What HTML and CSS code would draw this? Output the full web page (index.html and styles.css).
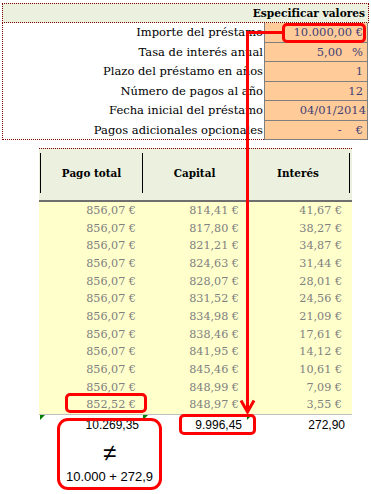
FILE: index.html
```html
<!DOCTYPE html>
<html lang="es">
<head>
<meta charset="utf-8">
<title>Préstamo</title>
<link rel="stylesheet" href="styles.css">
</head>
<body>
<div class="page">
  <section class="spec">
    <div class="spec-head">Especificar valores</div>
    <div class="spec-grid">
      <div class="lbl">Importe del préstamo</div><div class="val">10.000,00 €</div>
      <div class="lbl">Tasa de interés anual</div><div class="val">5,00 <span class="pct">%</span></div>
      <div class="lbl">Plazo del préstamo en años</div><div class="val">1</div>
      <div class="lbl">Número de pagos al año</div><div class="val">12</div>
      <div class="lbl">Fecha inicial del préstamo</div><div class="val">04/01/2014</div>
      <div class="lbl last">Pagos adicionales opcionales</div><div class="val last"><span class="dash">-</span>€</div>
    </div>
  </section>

  <section class="sched">
    <div class="sched-head">
      <div class="hc">Pago total</div>
      <div class="hc">Capital</div>
      <div class="hc hc-last">Interés</div>
    </div>
    <div class="sched-body">
      <div>856,07 €</div><div>814,41 €</div><div>41,67 €</div>
      <div>856,07 €</div><div>817,80 €</div><div>38,27 €</div>
      <div>856,07 €</div><div>821,21 €</div><div>34,87 €</div>
      <div>856,07 €</div><div>824,63 €</div><div>31,44 €</div>
      <div>856,07 €</div><div>828,07 €</div><div>28,01 €</div>
      <div>856,07 €</div><div>831,52 €</div><div>24,56 €</div>
      <div>856,07 €</div><div>834,98 €</div><div>21,09 €</div>
      <div>856,07 €</div><div>838,46 €</div><div>17,61 €</div>
      <div>856,07 €</div><div>841,95 €</div><div>14,12 €</div>
      <div>856,07 €</div><div>845,46 €</div><div>10,61 €</div>
      <div>856,07 €</div><div>848,99 €</div><div>7,09 €</div>
      <div>852,52 €</div><div>848,97 €</div><div>3,55 €</div>
    </div>
    <div class="totals">
      <div class="tc flag">10.269,35</div>
      <div class="tc flag">9.996,45</div>
      <div class="tc flag">272,90</div>
    </div>
  </section>

  <div class="mark mark-amount"></div>
  <div class="mark mark-last"></div>
  <div class="mark mark-capital"></div>
  <div class="mark mark-note">
    <div class="neq">≠</div>
    <div class="sum">10.000 + 272,9</div>
  </div>
  <svg class="arrow" width="371" height="494" viewBox="0 0 371 494">
    <path d="M283 32.5 H247.5 V411" fill="none" stroke="#ff0000" stroke-width="3"/>
    <path d="M241 400.5 L247.5 412 L254 400.5" fill="none" stroke="#ff0000" stroke-width="3"/>
  </svg>
</div>
</body>
</html>
```

FILE: styles.css
```css
* { box-sizing: border-box; }
html, body { margin: 0; padding: 0; background: #ffffff; }
.page {
  position: relative;
  width: 371px;
  height: 494px;
  overflow: hidden;
  font-family: "DejaVu Serif", "Liberation Serif", serif;
  font-size: 11.5px;
  color: #000;
}

/* ---------- specification block ---------- */
.spec { margin: 3px 0 0 2px; width: 367px; }
.spec-head {
  height: 20px;
  border: 1px dotted #800000;
  background: #ebf1de;
  text-align: right;
  font-weight: bold;
  font-size: 10.6px;
  line-height: 18px;
  padding-right: 3px;
}
.spec-grid {
  display: grid;
  grid-template-columns: 261px 104px;
  grid-auto-rows: 19.5px;
  border-left: 1px dotted #800000;
}
.lbl {
  text-align: right;
  padding-right: 1px;
  line-height: 19.5px;
  white-space: nowrap;
}
.lbl.last { border-bottom: 1px dotted #800000; }
.val {
  background: #ffcc99;
  color: #3f3f76;
  border-left: 1px solid #7f7f7f;
  border-right: 1px solid #7f7f7f;
  border-bottom: 1px solid #7f7f7f;
  text-align: right;
  padding-right: 4px;
  line-height: 18.5px;
  white-space: nowrap;
}
.val:nth-child(10) { padding-right: 1px; }
.pct { margin-left: 6px; }
.dash { margin-right: 14px; }

/* ---------- schedule ---------- */
.sched {
  margin: 8px 0 0 39px;
  width: 313px;
}
.sched-head {
  display: flex;
  height: 54px;
  border-top: 1px dotted #800000;
  border-bottom: 2px solid #6f6f6f;
  background: #ebf1de;
  padding: 4px 0 0 1px;
}
.hc {
  height: 40px;
  border-left: 1px solid #000;
  display: flex;
  align-items: center;
  justify-content: center;
  font-weight: bold;
  font-size: 10.4px;
}
.hc:nth-child(1) { width: 102px; }
.hc:nth-child(2) { width: 104px; }
.hc-last { width: 104px; border-right: 1px solid #000; }

.sched-body {
  display: grid;
  grid-template-columns: 103px 104px 106px;
  grid-auto-rows: 17.67px;
  background: #ffffcc;
  color: #808080;
  font-size: 11.2px;
}
.sched-body > div {
  text-align: right;
  line-height: 17.67px;
  white-space: nowrap;
}
.sched-body > div:nth-child(3n+1) { padding-right: 6px; }
.sched-body > div:nth-child(3n+2) { padding-right: 7px; }
.sched-body > div:nth-child(3n) { padding-right: 10px; }

.totals {
  display: grid;
  grid-template-columns: 103px 104px 106px;
  border-top: 1px solid #c0c0c0;
  height: 20px;
  font-family: "Liberation Sans", Arial, sans-serif;
  font-size: 12px;
}
.tc {
  position: relative;
  text-align: right;
  padding-top: 2px;
  line-height: 17px;
}
.tc:nth-child(1) { padding-right: 3px; }
.tc:nth-child(2) { padding-right: 4px; }
.tc:nth-child(3) { padding-right: 7px; }
.flag::before {
  content: "";
  position: absolute;
  left: 1px;
  top: 0;
  border-top: 5px solid #008000;
  border-right: 5px solid transparent;
}

/* ---------- annotations ---------- */
.mark {
  position: absolute;
  border: 3px solid #ff0000;
  border-radius: 5px;
}
.mark-amount { left: 282px; top: 23px; width: 84px; height: 20px; }
.mark-last { left: 65px; top: 393px; width: 82px; height: 20px; }
.mark-capital { left: 179px; top: 414px; width: 77px; height: 21px; }
.mark-note {
  left: 57px; top: 418px; width: 105px; height: 72px;
  border-radius: 11px;
  text-align: center;
  font-family: "Liberation Sans", Arial, sans-serif;
  padding-top: 20px;
}
.neq { font-size: 24px; line-height: 24px; font-weight: 300; }
.sum { font-size: 13px; line-height: 16px; margin-top: 4px; }
.arrow { position: absolute; left: 0; top: 0; pointer-events: none; }
```
